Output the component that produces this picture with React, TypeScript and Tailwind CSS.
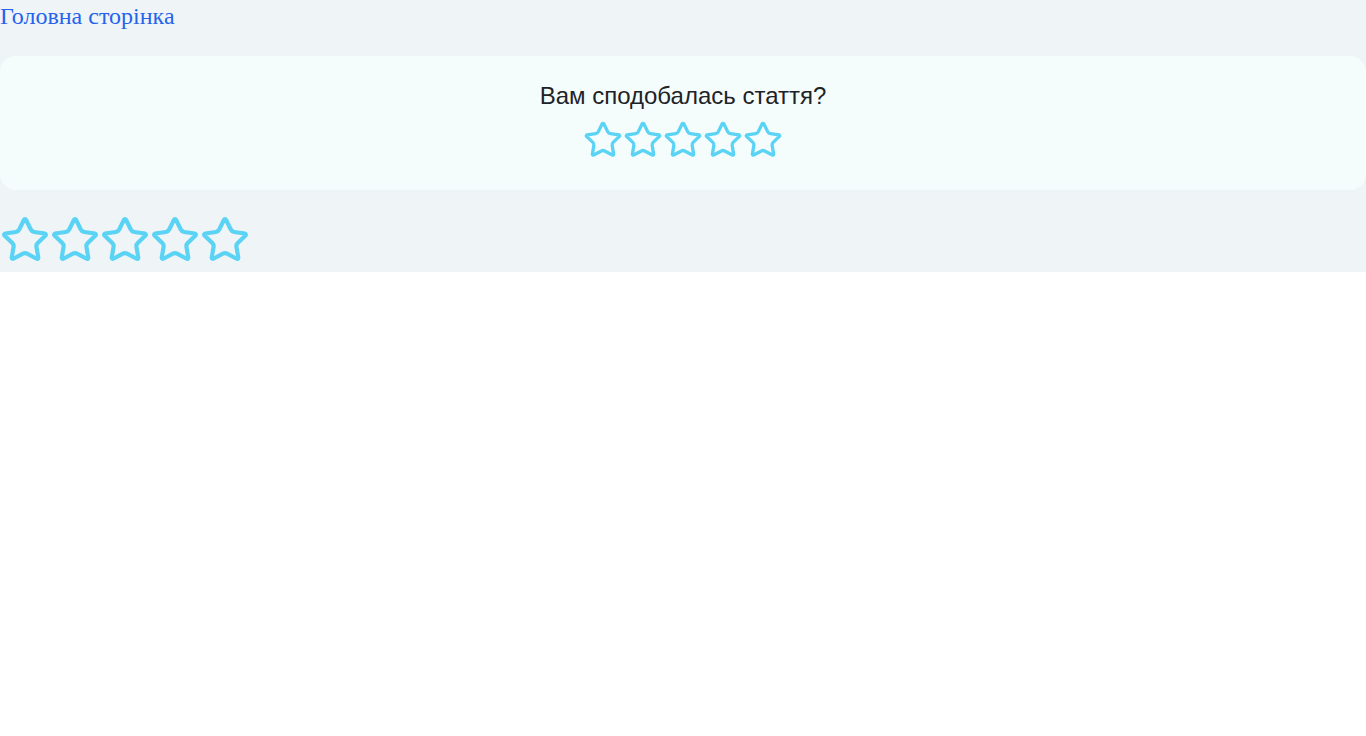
import {Star} from "lucide-react";

function StarRow({size, className}: {size: number; className?: string}) {
    return (
        <div className={`flex ${className ?? ""}`}>
            {[1, 2, 3, 4, 5].map((n) => (
                <button key={n} type="button" aria-label={`${n}`} className="block cursor-pointer">
                    <Star size={size} strokeWidth={2} className="text-[#5ad3f5]"/>
                </button>
            ))}
        </div>
    );
}

export default function App() {
    return (
        <div className="bg-[#eff4f7] pb-[7px]">
            <a href="/" className="block text-2xl leading-8 text-[#2563eb] font-['Liberation_Serif',serif]">
                Головна сторінка
            </a>
            <div className="mt-6 rounded-2xl bg-[#f5fdfc] pt-6 pb-[30px] flex flex-col items-center">
                <h2 className="text-2xl leading-8 text-[#1d2327] font-['Liberation_Sans',Arial,sans-serif]">
                    Вам сподобалась стаття?
                </h2>
                <StarRow size={40} className="mt-2"/>
            </div>
            <StarRow size={50} className="mt-[25px]"/>
        </div>
    );
}
